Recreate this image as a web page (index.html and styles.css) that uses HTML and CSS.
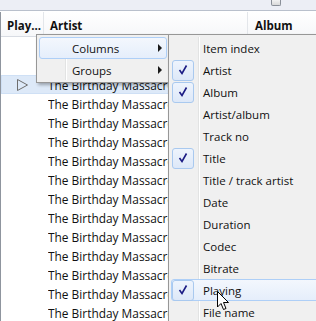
FILE: index.html
```html
<!DOCTYPE html>
<html>
<head>
<meta charset="utf-8">
<link rel="stylesheet" href="styles.css">
</head>
<body>
<div class="app">
  <div class="toolbar"><div class="thumb"></div></div>
  <div class="list">
    <div class="header">
      <div class="hcol c1">Play...</div>
      <div class="hcol c2">Artist</div>
      <div class="hcol c3">Album</div>
    </div>
    <div class="rows">
      <div class="row"><div class="cell c1"></div><div class="cell c2"></div></div>
      <div class="row"><div class="cell c1"></div><div class="cell c2"></div></div>
      <div class="row playing"><div class="cell c1"><svg width="13" height="14" viewBox="0 0 13 14"><path d="M1.5 1.5 L11.5 7 L1.5 12.5 Z" fill="none" stroke="#6e6e6e" stroke-width="1"/></svg></div><div class="cell c2">The Birthday Massacre</div></div>
      <div class="row"><div class="cell c1"></div><div class="cell c2">The Birthday Massacre</div></div>
      <div class="row"><div class="cell c1"></div><div class="cell c2">The Birthday Massacre</div></div>
      <div class="row"><div class="cell c1"></div><div class="cell c2">The Birthday Massacre</div></div>
      <div class="row"><div class="cell c1"></div><div class="cell c2">The Birthday Massacre</div></div>
      <div class="row"><div class="cell c1"></div><div class="cell c2">The Birthday Massacre</div></div>
      <div class="row"><div class="cell c1"></div><div class="cell c2">The Birthday Massacre</div></div>
      <div class="row"><div class="cell c1"></div><div class="cell c2">The Birthday Massacre</div></div>
      <div class="row"><div class="cell c1"></div><div class="cell c2">The Birthday Massacre</div></div>
      <div class="row"><div class="cell c1"></div><div class="cell c2">The Birthday Massacre</div></div>
      <div class="row"><div class="cell c1"></div><div class="cell c2">The Birthday Massacre</div></div>
      <div class="row"><div class="cell c1"></div><div class="cell c2">The Birthday Massacre</div></div>
      <div class="row"><div class="cell c1"></div><div class="cell c2">The Birthday Massacre</div></div>
    </div>
  </div>

  <div class="menu main-menu">
    <div class="gutter"></div>
    <div class="item hover"><span class="label">Columns</span><span class="arrow"></span></div>
    <div class="item"><span class="label">Groups</span><span class="arrow"></span></div>
  </div>

  <div class="menu sub-menu">
    <div class="gutter"></div>
    <div class="item"><span class="check"></span><span class="label">Item index</span></div>
    <div class="item"><span class="check on"><svg width="12" height="12" viewBox="0 0 12 12"><path d="M2.5 6 L5 9.5 L9.5 1.5" fill="none" stroke="#1c1c84" stroke-width="1.6"/></svg></span><span class="label">Artist</span></div>
    <div class="item"><span class="check on"><svg width="12" height="12" viewBox="0 0 12 12"><path d="M2.5 6 L5 9.5 L9.5 1.5" fill="none" stroke="#1c1c84" stroke-width="1.6"/></svg></span><span class="label">Album</span></div>
    <div class="item"><span class="check"></span><span class="label">Artist/album</span></div>
    <div class="item"><span class="check"></span><span class="label">Track no</span></div>
    <div class="item"><span class="check on"><svg width="12" height="12" viewBox="0 0 12 12"><path d="M2.5 6 L5 9.5 L9.5 1.5" fill="none" stroke="#1c1c84" stroke-width="1.6"/></svg></span><span class="label">Title</span></div>
    <div class="item"><span class="check"></span><span class="label">Title / track artist</span></div>
    <div class="item"><span class="check"></span><span class="label">Date</span></div>
    <div class="item"><span class="check"></span><span class="label">Duration</span></div>
    <div class="item"><span class="check"></span><span class="label">Codec</span></div>
    <div class="item"><span class="check"></span><span class="label">Bitrate</span></div>
    <div class="item hover"><span class="check on"><svg width="12" height="12" viewBox="0 0 12 12"><path d="M2.5 6 L5 9.5 L9.5 1.5" fill="none" stroke="#1c1c84" stroke-width="1.6"/></svg></span><span class="label">Playing</span></div>
    <div class="item"><span class="check"></span><span class="label">File name</span></div>
  </div>

  <svg class="cursor" width="14" height="22" viewBox="0 0 14 22"><path d="M0.5 0.5 L0.5 16 L4 12.5 L6.5 18.5 L9 17.5 L6.5 11.5 L11.5 11.5 Z" fill="#fff" stroke="#000" stroke-width="1"/></svg>
</div>
</body>
</html>
```
FILE: styles.css
```css
html, body {
  margin: 0;
  padding: 0;
  overflow: hidden;
  background: #fff;
}
.app {
  position: relative;
  width: 316px;
  height: 321px;
  overflow: hidden;
  font-family: "Open Sans", "Noto Sans", sans-serif;
  font-size: 11.5px;
  color: #111;
}
.toolbar {
  height: 10px;
  background: #eceef5;
  border-bottom: 1px solid #b9c0cc;
  display: flex;
  margin-bottom: 1px;
}
.thumb {
  margin-left: 271px;
  width: 8px;
  height: 5px;
  border: 1px solid #8a8f98;
  border-top: none;
  border-radius: 0 0 2px 2px;
  background: linear-gradient(#f2f2f2, #d9d9d9);
}
.list {
  border-left: 1px solid #8f959e;
  height: 310px;
}
.header {
  display: flex;
  height: 24px;
  background: linear-gradient(#ffffff, #f6f7f9);
  border-bottom: 1px solid #d8dce3;
  font-weight: bold;
  align-items: stretch;
}
.hcol {
  height: 24px;
  line-height: 23px;
  padding-top: 2px;
  box-sizing: border-box;
  white-space: nowrap;
  overflow: hidden;
}
.header .c1 { width: 43px; padding-left: 6px; border-right: 1px solid #e3e6ea; }
.header .c2 { width: 204px; padding-left: 6px; border-right: 1px solid #e3e6ea; }
.header .c3 { padding-left: 7px; flex: 1; }
.rows { display: flex; flex-direction: column; }
.row {
  display: flex;
  height: 19px;
  align-items: center;
  font-size: 11.9px;
}
.row.playing {
  background: #dde9f8;
  box-shadow: inset 0 0 0 1px #cfe0f5;
}
.cell { white-space: nowrap; overflow: hidden; }
.row .c1 { width: 47px; display: flex; align-items: center; padding-left: 15px; box-sizing: border-box; }
.row .c2 { width: 200px; }

.menu {
  position: absolute;
  background: #f0f0f0;
  border: 1px solid #979797;
  box-shadow: 2px 2px 3px rgba(0,0,0,0.3);
  padding: 2px;
  box-sizing: border-box;
}
.menu .gutter {
  position: absolute;
  top: 2px;
  bottom: 2px;
  border-left: 1px solid #e2e3e3;
  border-right: 1px solid #ffffff;
}
.main-menu {
  left: 36px;
  top: 34px;
  width: 134px;
  height: 49px;
}
.main-menu .gutter { left: 28px; }
.sub-menu {
  left: 168px;
  top: 34px;
  width: 170px;
  height: 300px;
}
.sub-menu .gutter { left: 29px; }
.item {
  position: relative;
  display: flex;
  align-items: center;
  height: 22px;
  box-sizing: border-box;
  border: 1px solid transparent;
  border-radius: 3px;
}
.item.hover {
  border-color: #aecff7;
  background: linear-gradient(#f3f7fd, #e5eefb);
}
.main-menu .item { padding-left: 32px; }
.main-menu .arrow {
  position: absolute;
  left: 118px;
  top: 6px;
  width: 0;
  height: 0;
  border-top: 4px solid transparent;
  border-bottom: 4px solid transparent;
  border-left: 4px solid #1a1a1a;
}
.check {
  width: 22px;
  height: 21px;
  box-sizing: border-box;
  margin-right: 9px;
  border-radius: 3px;
  display: flex;
  align-items: center;
  justify-content: center;
  flex: none;
}
.check.on {
  border: 1px solid #a9c9ef;
  background: linear-gradient(#eef4fd, #dde8f8);
}
.label { white-space: nowrap; }
.cursor {
  position: absolute;
  left: 217px;
  top: 291px;
}
```
